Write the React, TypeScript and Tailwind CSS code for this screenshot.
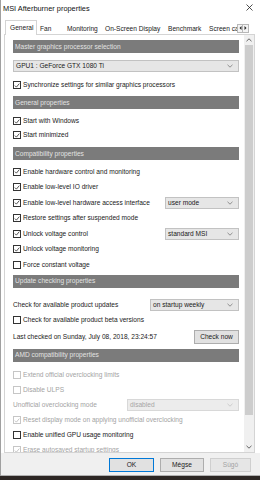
import React from "react";

const FONT = { fontFamily: '"Liberation Sans", Arial, sans-serif' };

function Box({ checked, disabled }: { checked?: boolean; disabled?: boolean }) {
  return (
    <div
      className={`w-[8px] h-[8px] shrink-0 border bg-white flex items-center justify-center ${
        disabled ? "border-[#c6c6c6]" : "border-[#333333]"
      }`}
    >
      {checked && (
        <svg width="7" height="7" viewBox="0 0 7 7">
          <path
            d="M1 3.6 L2.8 5.4 L6.2 1.3"
            fill="none"
            stroke={disabled ? "#b4b4b4" : "#222222"}
            strokeWidth="0.9"
          />
        </svg>
      )}
    </div>
  );
}

function Check({
  label,
  checked,
  disabled,
  h = "h-[15.5px]",
  children,
}: {
  label: string;
  checked?: boolean;
  disabled?: boolean;
  h?: string;
  children?: React.ReactNode;
}) {
  return (
    <div className={`${h} flex items-center shrink-0`}>
      <Box checked={checked} disabled={disabled} />
      <span className={`ml-[2px] whitespace-nowrap ${disabled ? "text-[#a3a3a3]" : "text-[#1a1a1a]"}`}>
        {label}
      </span>
      {children}
    </div>
  );
}

function Chevron({ color = "#707070" }: { color?: string }) {
  return (
    <svg width="6" height="4" viewBox="0 0 6 4">
      <path d="M0.5 0.8 L3 3.2 L5.5 0.8" fill="none" stroke={color} strokeWidth="0.8" />
    </svg>
  );
}

function Select({ value, w, disabled }: { value: string; w: string; disabled?: boolean }) {
  return (
    <div
      className={`${w} h-[12px] ml-auto shrink-0 border flex items-center justify-between pl-[2px] pr-[5px] ${
        disabled ? "bg-[#ececec] border-[#d8d8d8] text-[#a6a6a6]" : "bg-[#e6e6e6] border-[#c2c2c2] text-[#1a1a1a]"
      }`}
    >
      <span className="whitespace-nowrap">{value}</span>
      <Chevron color={disabled ? "#c4c4c4" : "#777777"} />
    </div>
  );
}

function Header({ title, mt }: { title: string; mt: string }) {
  return (
    <div className={`${mt} h-[13px] shrink-0 bg-[#7b7b7b] text-[#e2e2e2] pl-[2px] flex items-center`}>
      {title}
    </div>
  );
}

export default function App() {
  return (
    <div className="w-[260px] h-[480px] bg-[#2d2724] overflow-hidden flex flex-col text-[6.6px]" style={FONT}>
      <div className="h-[476px] bg-white border-l border-[#a0a0a0] flex flex-col">
        {/* Title bar */}
        <div className="h-[20px] shrink-0 flex items-start justify-between pt-[3px] pl-[2px] pr-[7px]">
          <span className="text-[7.4px] text-[#111111]">MSI Afterburner properties</span>
          <svg width="7" height="7" viewBox="0 0 7 7" className="mt-[1px]">
            <path d="M0.5 0.5 L6.5 6.5 M6.5 0.5 L0.5 6.5" stroke="#222222" strokeWidth="0.8" />
          </svg>
        </div>

        {/* Tabs */}
        <div className="h-[14px] shrink-0 flex items-stretch pl-[4px] pr-[11px] text-[#1a1a1a]">
          <div className="w-[32px] bg-white border border-b-0 border-[#d4d4d4] pl-[4px] flex items-center -mb-[1px] relative z-10">
            General
          </div>
          <div className="w-[24px] pl-[3px] pt-[3px] flex items-center">Fan</div>
          <div className="w-[40px] pl-[6px] pt-[3px] flex items-center">Monitoring</div>
          <div className="w-[63px] pl-[4px] pt-[3px] flex items-center whitespace-nowrap">On-Screen Display</div>
          <div className="w-[41px] pl-[4px] pt-[3px] flex items-center">Benchmark</div>
          <div className="flex-1 pl-[4px] pt-[3px] flex items-center overflow-hidden whitespace-nowrap">
            Screen capture
          </div>
          <div className="flex items-center pt-[2px] gap-0">
            <div className="w-[6px] h-[9px] border border-[#b8b8b8] bg-[#f4f4f4] flex items-center justify-center">
              <svg width="3" height="4" viewBox="0 0 3 4">
                <path d="M2.5 0 L0.5 2 L2.5 4 Z" fill="#222222" />
              </svg>
            </div>
            <div className="w-[6px] h-[9px] border border-l-0 border-[#b8b8b8] bg-[#f4f4f4] flex items-center justify-center">
              <svg width="3" height="4" viewBox="0 0 3 4">
                <path d="M0.5 0 L2.5 2 L0.5 4 Z" fill="#222222" />
              </svg>
            </div>
          </div>
        </div>

        {/* Panel */}
        <div className="h-[419px] shrink-0 ml-[3px] mr-[5px] border border-[#d4d4d4] flex overflow-hidden">
          <div className="flex-1 flex flex-col pl-[8px] pr-[5px] pt-[5px] overflow-hidden">
            <Header title="Master graphics processor selection" mt="mt-0" />
            <div className="mt-[7px] flex">
              <Select value="GPU1 : GeForce GTX 1080 Ti" w="w-full" />
            </div>
            <div className="mt-[6px]">
              <Check label="Synchronize settings for similar graphics processors" checked h="h-[14px]" />
            </div>

            <Header title="General properties" mt="mt-[4px]" />
            <div className="mt-[5px]">
              <Check label="Start with Windows" checked h="h-[14px]" />
              <Check label="Start minimized" checked h="h-[14px]" />
            </div>

            <Header title="Compatibility properties" mt="mt-[5px]" />
            <div className="mt-[4px]">
              <Check label="Enable hardware control and monitoring" checked />
              <Check label="Enable low-level IO driver" checked />
              <Check label="Enable low-level hardware access interface" checked>
                <Select value="user mode" w="w-[74px]" />
              </Check>
              <Check label="Restore settings after suspended mode" checked />
              <Check label="Unlock voltage control" checked>
                <Select value="standard MSI" w="w-[74px]" />
              </Check>
              <Check label="Unlock voltage monitoring" checked />
              <Check label="Force constant voltage" />
            </div>

            <Header title="Update checking properties" mt="mt-[2px]" />
            <div className="mt-[11px] h-[14px] flex items-center text-[#1a1a1a]">
              <span className="whitespace-nowrap">Check for available product updates</span>
              <Select value="on startup weekly" w="w-[89px]" />
            </div>
            <div className="mt-[2px]">
              <Check label="Check for available product beta versions" h="h-[14px]" />
            </div>
            <div className="mt-[3px] h-[14px] flex items-center text-[#1a1a1a]">
              <span className="whitespace-nowrap">Last checked on Sunday, July 08, 2018, 23:24:57</span>
              <div className="ml-auto w-[45px] h-[14px] bg-[#e1e1e1] border border-[#adadad] flex items-center justify-center">
                Check now
              </div>
            </div>

            <Header title="AMD compatibility properties" mt="mt-[5px]" />
            <div className="mt-[6px]">
              <Check label="Extend official overclocking limits" disabled h="h-[15px]" />
              <Check label="Disable ULPS" disabled h="h-[15px]" />
              <div className="h-[15px] flex items-center text-[#a3a3a3]">
                <span className="whitespace-nowrap">Unofficial overclocking mode</span>
                <Select value="disabled" w="w-[112px]" disabled />
              </div>
              <Check label="Reset display mode on applying unofficial overclocking" checked disabled h="h-[15px]" />
              <Check label="Enable unified GPU usage monitoring" h="h-[15px]" />
              <Check label="Erase autosaved startup settings" checked disabled h="h-[15px]" />
            </div>
          </div>

          {/* Scrollbar */}
          <div className="w-[10px] shrink-0 bg-[#f0f0f0] flex flex-col items-center">
            <div className="h-[10px] flex items-center justify-center">
              <svg width="6" height="4" viewBox="0 0 6 4">
                <path d="M0.5 3.2 L3 0.8 L5.5 3.2" fill="none" stroke="#555555" strokeWidth="0.9" />
              </svg>
            </div>
            <div className="w-[8px] h-[370px] bg-[#cdcdcd]" />
            <div className="flex-1" />
            <div className="h-[10px] flex items-center justify-center">
              <svg width="6" height="4" viewBox="0 0 6 4">
                <path d="M0.5 0.8 L3 3.2 L5.5 0.8" fill="none" stroke="#555555" strokeWidth="0.9" />
              </svg>
            </div>
          </div>
        </div>

        {/* Button bar */}
        <div className="flex-1 bg-[#f0f0f0] flex items-start justify-end gap-[6px] pt-[5px] pr-[9px] border-b border-[#b0b0b0]">
          <div className="w-[45px] h-[14px] bg-[#e1e1e1] border border-[#0078d7] flex items-center justify-center text-[#1a1a1a]">
            OK
          </div>
          <div className="w-[44px] h-[14px] bg-[#e1e1e1] border border-[#adadad] flex items-center justify-center text-[#1a1a1a]">
            Mégse
          </div>
          <div className="w-[41px] h-[14px] bg-[#e6e6e6] border border-[#cfcfcf] flex items-center justify-center text-[#a3a3a3]">
            Súgó
          </div>
        </div>
      </div>
    </div>
  );
}
